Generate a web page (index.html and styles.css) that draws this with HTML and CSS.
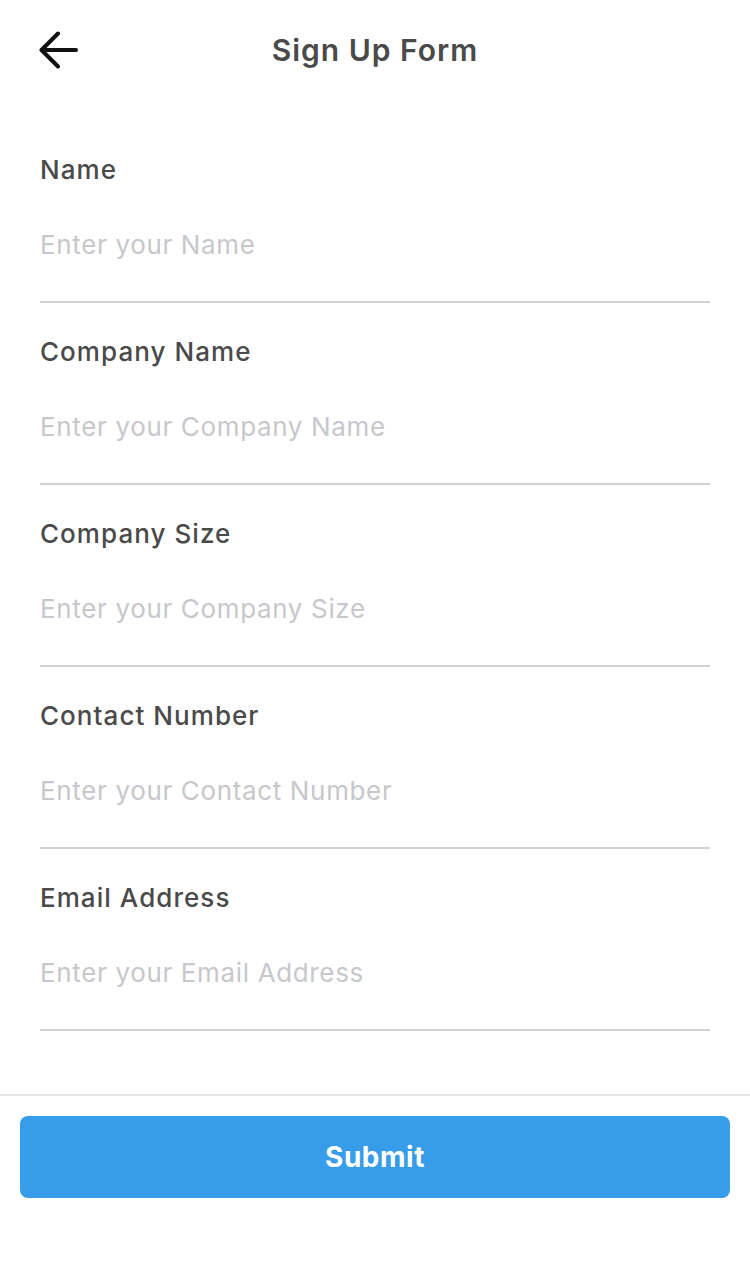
FILE: index.html
```html
<!DOCTYPE html>
<html lang="en">
<head>
<meta charset="utf-8">
<title>Sign Up Form</title>
<link rel="stylesheet" href="styles.css">
</head>
<body>
<div class="screen">
  <header class="topbar">
    <button class="back" aria-label="Back">
      <svg width="40" height="40" viewBox="0 0 40 40" fill="none" stroke="#111" stroke-width="4" stroke-linecap="round" stroke-linejoin="round">
        <path d="M37 20H3"/>
        <path d="M19 3.5L2.5 20L19 36.5"/>
      </svg>
    </button>
    <h1 class="title">Sign Up Form</h1>
  </header>
  <main class="form">
    <div class="field">
      <div class="label">Name</div>
      <div class="input">Enter your Name</div>
    </div>
    <div class="field">
      <div class="label">Company Name</div>
      <div class="input">Enter your Company Name</div>
    </div>
    <div class="field">
      <div class="label">Company Size</div>
      <div class="input">Enter your Company Size</div>
    </div>
    <div class="field">
      <div class="label">Contact Number</div>
      <div class="input">Enter your Contact Number</div>
    </div>
    <div class="field">
      <div class="label">Email Address</div>
      <div class="input">Enter your Email Address</div>
    </div>
  </main>
  <footer class="footer">
    <button class="submit">Submit</button>
  </footer>
</div>
</body>
</html>
```
FILE: styles.css
```css
* { box-sizing: border-box; }
html, body { margin: 0; padding: 0; background: #fff; }
body { font-family: Inter, "Noto Sans", sans-serif; color: #4a4a4a; }
.screen { width: 750px; height: 1280px; display: flex; flex-direction: column; }
.topbar { height: 100px; display: flex; align-items: center; justify-content: center; position: relative; }
.back { position: absolute; left: 39px; top: 30px; width: 40px; height: 40px; padding: 0; border: 0; background: none; display: flex; }
.title { margin: 0; font-size: 30px; font-weight: 600; color: #4a4a4a; line-height: 40px; letter-spacing: 1px; }
.form { padding: 20px 40px 0; display: flex; flex-direction: column; }
.field { padding-top: 34px; padding-bottom: 40px; border-bottom: 2px solid #d2d2d2; display: flex; flex-direction: column; gap: 43px; }
.field + .field { padding-top: 33px; }
.label { font-size: 26px; line-height: 32px; font-weight: 550; color: #4a4a4a; letter-spacing: 1.05px; }
.input { font-size: 26px; line-height: 32px; font-weight: 400; color: #c7c7cc; letter-spacing: 0.65px; }
.footer { margin-top: 63px; border-top: 2px solid #e6e6e6; padding: 20px 20px 0; }
.submit { width: 100%; height: 82px; border: 0; border-radius: 8px; background: #379ce9; color: #fff; font-family: Inter, "Noto Sans", sans-serif; font-size: 28px; font-weight: 700; letter-spacing: 0.5px; }
```
